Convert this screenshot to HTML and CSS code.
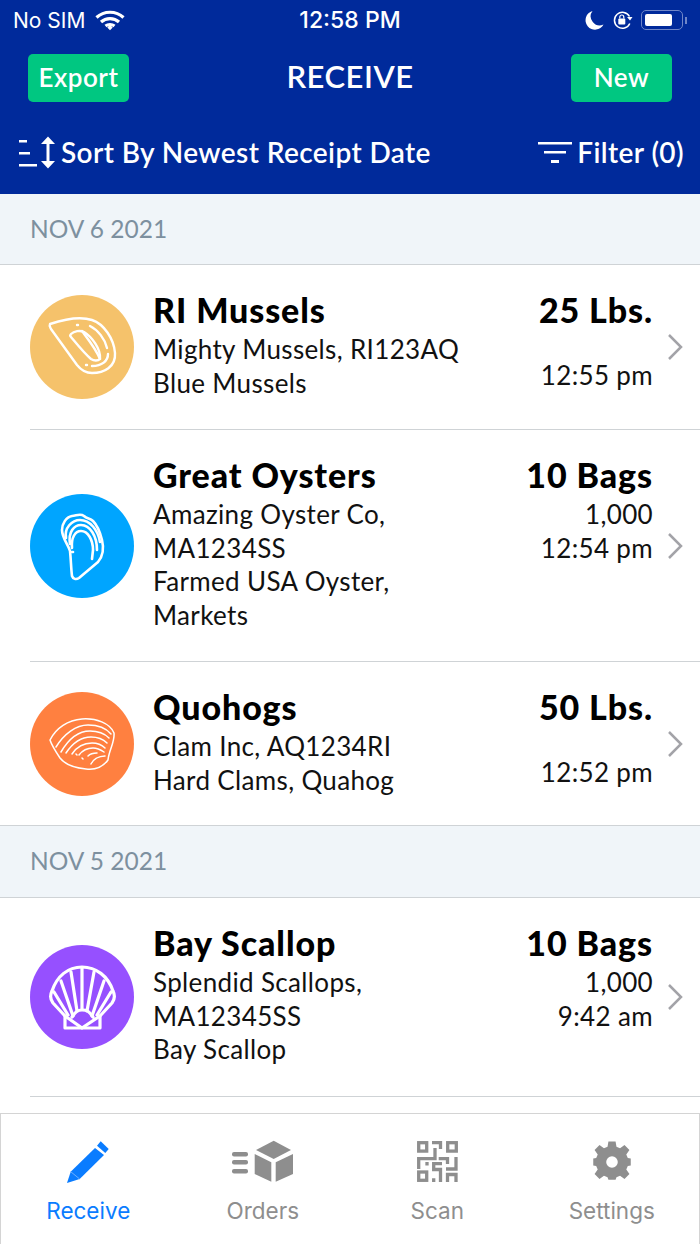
FILE: index.html
```html
<!DOCTYPE html>
<html lang="en">
<head>
    <meta charset="UTF-8">
    <meta name="viewport" content="width=device-width, initial-scale=1.0">
    <title>Receive</title>
    <link rel="stylesheet" href="styles.css">
</head>
<body>
    <div class="app">
        <header class="top">
            <div class="status-bar">
                <div class="status-left">
                    <span>No SIM</span>
                    <svg class="wifi" width="30" height="22" viewBox="0 0 30 22"><path d="M1.5 8.5C9 1.500 21 1.500 28.500 8.500M6 13C11 8.500 19 8.500 24 13M10.500 17C13 15 17 15 19.500 17" fill="none" stroke="#fff" stroke-width="3.200"/><path d="M12.300 18.500L15 15.800L17.700 18.500L15 21.200Z" fill="#fff"/></svg>
                </div>
                <span class="status-time">12:58 PM</span>
                <div class="status-right">
                    <svg width="20" height="20" viewBox="0 0 20 20"><path d="M7.500 1A9.500 9.500 0 1 0 18.500 14.500A9 9 0 0 1 7.500 1Z" fill="#fff"/></svg>
                    <svg width="22" height="20" viewBox="0 0 22 20"><path d="M17.500 6.500A8 8 0 1 0 17.800 13.500" fill="none" stroke="#fff" stroke-width="1.500"/><path d="M15 7L20.500 7L18 10.500Z" fill="#fff"/><rect x="6.300" y="8.500" width="7" height="6" rx="1" fill="#fff"/><path d="M7.800 8.500V7A2 2 0 0 1 11.800 7V8.500" fill="none" stroke="#fff" stroke-width="1.200"/></svg>
                    <div class="battery"><div class="battery-fill"></div></div>
                    <div class="battery-cap"></div>
                </div>
            </div>
            <div class="title-row">
                <button class="green-btn">Export</button>
                <h1>RECEIVE</h1>
                <button class="green-btn">New</button>
            </div>
            <div class="tools">
                <div class="tool">
                    <svg width="38" height="34" viewBox="0 0 38 34"><path d="M1 5H9V7.500H1ZM1 17H12V19.500H1ZM1 29H19V31.500H1Z" fill="#fff"/><path d="M30 4V30" stroke="#fff" stroke-width="3"/><path d="M23 9L30 1.500L37 9ZM23 26L30 33.500L37 26Z" fill="#fff"/></svg>
                    <span>Sort By Newest Receipt Date</span>
                </div>
                <div class="tool">
                    <svg width="34" height="24" viewBox="0 0 34 24"><path d="M0 2H34V4.500H0ZM6 11H28V13.500H6ZM13 20H21V23H13Z" fill="#fff"/></svg>
                    <span>Filter (0)</span>
                </div>
            </div>
        </header>

        <main class="list">
            <div class="day">NOV 6 2021</div>

            <div class="row">
                <div class="pic mussel">
                    <svg viewBox="0 0 104 104" width="104" height="104" fill="none" stroke="#fff" stroke-width="2.400" stroke-linecap="round" stroke-linejoin="round">
                        <path d="M20 29C19 31 20 32 21 34L47 70C51 75 56 78 62 78C74 78 86 72 85 58C84 44 74 29 62 25C50 21 32 25 20 29Z"/>
                        <path d="M41 39C44 36 50 35 54 37C62 42 71 54 70 64C68 66 64 66 61 64C54 58 46 48 41 42C40 41 40 40 41 39Z"/>
                        <path d="M52 36C58 44 66 54 70 64"/>
                        <path d="M60 31C68 35 75 44 77 53"/>
                        <path d="M78 59C78 66 72 71 62 71"/>
                        <path d="M47 30L48 30M56 70L57 70"/>
                    </svg>
                </div>
                <div class="info">
                    <div class="name">RI Mussels</div>
                    <div class="sub">Mighty Mussels, RI123AQ<br>Blue Mussels</div>
                </div>
                <div class="amounts">
                    <div class="qty">25 Lbs.</div>
                    <div class="sub no-count">12:55 pm</div>
                </div>
                <svg class="chev" width="18" height="28" viewBox="0 0 18 28"><path d="M3 2L15 14L3 26" fill="none" stroke="#a3a3a8" stroke-width="2.500"/></svg>
            </div>

            <div class="row">
                <div class="pic oyster">
                    <svg viewBox="0 0 104 104" width="104" height="104" fill="none" stroke="#fff" stroke-width="2.600" stroke-linecap="round" stroke-linejoin="round">
                        <path d="M42 82C43 85 46 86 49 84L68 68C73 62 74 54 72 46C70 38 68 32 63 27C60 24 57 25 54 22C50 19 46 22 42 22C36 23 32 30 32 36C32 44 38 50 40 57C41 66 41 74 42 82Z"/>
                        <path d="M36 44C34 34 42 26 50 26C60 26 68 36 70 48"/>
                        <path d="M40 50C38 38 44 31 51 31C60 31 67 42 67 56"/>
                        <path d="M42 54C41 44 45 37 51 37C58 37 63 46 63 56L62 65"/>
                        <path d="M42 58L43 58"/>
                    </svg>
                </div>
                <div class="info">
                    <div class="name">Great Oysters</div>
                    <div class="sub">Amazing Oyster Co,<br>MA1234SS<br>Farmed USA Oyster,<br>Markets</div>
                </div>
                <div class="amounts">
                    <div class="qty">10 Bags</div>
                    <div class="sub">1,000<br>12:54 pm</div>
                </div>
                <svg class="chev" width="18" height="28" viewBox="0 0 18 28"><path d="M3 2L15 14L3 26" fill="none" stroke="#a3a3a8" stroke-width="2.500"/></svg>
            </div>

            <div class="row last">
                <div class="pic clam">
                    <svg viewBox="0 0 104 104" width="104" height="104" fill="none" stroke="#fff" stroke-width="1.500" stroke-linecap="round" stroke-linejoin="round">
                        <path d="M20 48C26 36 38 28 52 27C66 26 80 31 84 41C85 50 79 58 78 68C72 76 64 78 56 77C46 76 36 74 30 66C26 60 22 54 20 48Z"/>
                        <path d="M26 55C34 42 46 33 58 33C68 33 76 36 81 42"/>
                        <path d="M31 60C38 48 48 39 60 39C68 39 74 41 79 46"/>
                        <path d="M36 61C42 52 50 45 61 45C68 45 73 47 77 51"/>
                        <path d="M42 62C46 56 53 51 62 51C68 51 72 53 75 56"/>
                        <path d="M49 63C52 59 57 56 63 56C67 56 71 58 74 60"/>
                        <path d="M58 64C60 62 63 61 67 61"/>
                        <path d="M61 72C63 68 68 64 75 64"/>
                        <path d="M46 62L47 63M52 66L53 67"/>
                    </svg>
                </div>
                <div class="info">
                    <div class="name">Quohogs</div>
                    <div class="sub">Clam Inc, AQ1234RI<br>Hard Clams, Quahog</div>
                </div>
                <div class="amounts">
                    <div class="qty">50 Lbs.</div>
                    <div class="sub no-count">12:52 pm</div>
                </div>
                <svg class="chev" width="18" height="28" viewBox="0 0 18 28"><path d="M3 2L15 14L3 26" fill="none" stroke="#a3a3a8" stroke-width="2.500"/></svg>
            </div>

            <div class="day second">NOV 5 2021</div>

            <div class="row bottom">
                <div class="pic scallop">
                    <svg viewBox="0 0 104 104" width="104" height="104" fill="none" stroke="#fff" stroke-width="3.200" stroke-linecap="round" stroke-linejoin="round">
                        <path d="M35 71L23 58C20 54 20 50 22 46C27 31 38 22 52 22C66 22 78 31 83 46C85 50 85 54 82 58L70 71V83H35Z"/>
                        <path d="M35 71L52 83L70 71M42 72C46 66 48 65 52 65C57 65 59 66 63 72"/>
                        <path d="M43 71L31 36M47 66L41 27M52 64V23M57 66L64 27M62 71L74 36M38 70L24 47M67 70L81 47"/>
                    </svg>
                </div>
                <div class="info">
                    <div class="name">Bay Scallop</div>
                    <div class="sub">Splendid Scallops,<br>MA12345SS<br>Bay Scallop</div>
                </div>
                <div class="amounts">
                    <div class="qty">10 Bags</div>
                    <div class="sub">1,000<br>9:42 am</div>
                </div>
                <svg class="chev" width="18" height="28" viewBox="0 0 18 28"><path d="M3 2L15 14L3 26" fill="none" stroke="#a3a3a8" stroke-width="2.500"/></svg>
            </div>
        </main>

        <nav class="tabs">
            <div class="tab active">
                <svg width="50" height="46" viewBox="0 0 50 46"><path d="M4 44L7.700 32.700L32 9L41 16L16.700 40Z" fill="#0a7cff"/><path d="M37.700 2.300L45.700 10L42.300 14L34 6.700Z" fill="#0a7cff"/><path d="M7.700 32.700L16.700 40" stroke="#6db0ff" stroke-width="1"/></svg>
                <span>Receive</span>
            </div>
            <div class="tab">
                <svg width="70" height="46" viewBox="0 0 70 46" fill="#8e8e8e"><rect x="4" y="13" width="16" height="4.500" rx="2"/><rect x="4" y="21" width="16" height="4.500" rx="2"/><rect x="4" y="30" width="16" height="4.500" rx="2"/><path d="M45.700 1.700L63 11L45.700 20L28 11Z"/><path d="M26.700 15L43.300 23.300V42.700L26.700 35Z"/><path d="M47.700 23.300L65 15V35L47.700 42.700Z"/></svg>
                <span>Orders</span>
            </div>
            <div class="tab">
                <svg class="qr" width="41" height="41" viewBox="0 0 41 41" fill="none" stroke="#8e8e8e" stroke-width="3.300"><rect x="1.700" y="1.700" width="8" height="8.400"/><rect x="30.700" y="1.700" width="8.600" height="8.400"/><rect x="1.700" y="31" width="8" height="8.300"/><path d="M15 1.700H23.500V8M1.700 28V17.700H18V7M21.700 17.700H30.500V23M39 16V28H29M25 22.700H16.700V28.500H23.500V41M30.500 41V33.500H39V41M16.700 37.300V41M10 21V24.500"/></svg>
                <span>Scan</span>
            </div>
            <div class="tab">
                <svg width="50" height="46" viewBox="-3 0 56 50"><path fill="#8e8e8e" fill-rule="evenodd" d="M21 2H29L30 8L34 9.700L39 6L44.500 11.500L41 16.500L42.700 20.500L46 21V29L42.700 29.500L41 33.500L44.500 38.500L39 44L34 40.300L30 42L29 45H21L20 42L16 40.300L11 44L5.500 38.500L9 33.500L7.300 29.500L4 29V21L7.300 20.500L9 16.500L5.500 11.500L11 6L16 9.700L20 8ZM25 18.500A6.500 6.500 0 1 0 25 31.500A6.500 6.500 0 1 0 25 18.500Z"/></svg>
                <span>Settings</span>
            </div>
        </nav>
    </div>
</body>
</html>
```

FILE: styles.css
```css
* {
    box-sizing: border-box;
}
body {
    margin: 0;
    font-family: Lato, "Open Sans", sans-serif;
    color: #000;
    background-color: #fff;
}
.app {
    display: flex;
    flex-direction: column;
    height: 1244px;
    overflow: hidden;
}

/* blue header */
.top {
    height: 194px;
    flex-shrink: 0;
    background-color: #002a9b;
    color: #fff;
}
.status-bar {
    display: grid;
    grid-template-columns: 1fr auto 1fr;
    align-items: center;
    height: 40px;
    padding: 0 13px;
    font-family: Inter, Roboto, sans-serif;
    font-size: 21px;
}
.status-time {
    font-size: 23px;
    font-weight: 500;
}
.status-left {
    display: flex;
    align-items: center;
    gap: 10px;
}
.status-right {
    display: flex;
    align-items: center;
    justify-content: flex-end;
    gap: 7px;
}
.battery {
    width: 42px;
    height: 20px;
    padding: 3px;
    border: 1.5px solid #6f86c8;
    border-radius: 5px;
}
.battery-fill {
    width: 27px;
    height: 100%;
    background-color: #fff;
    border-radius: 2px;
}
.battery-cap {
    width: 2px;
    height: 7px;
    margin-left: -5px;
    background-color: #6f86c8;
}
.title-row {
    display: flex;
    align-items: center;
    justify-content: space-between;
    margin-top: 14px;
    padding: 0 28px;
}
.title-row h1 {
    margin: 0 0 4px;
    font-size: 31px;
    font-weight: 600;
    letter-spacing: 0.5px;
}
.green-btn {
    width: 101px;
    height: 48px;
    padding: 0 0 3px;
    border: none;
    border-radius: 5px;
    background-color: #00c781;
    color: #fff;
    font-family: inherit;
    font-size: 26px;
    font-weight: 600;
    letter-spacing: 0.5px;
}
.tools {
    display: flex;
    align-items: center;
    justify-content: space-between;
    margin-top: 33px;
    padding: 0 16px 0 18px;
}
.tool {
    display: flex;
    align-items: center;
    gap: 5px;
    font-size: 28px;
    font-weight: 600;
    letter-spacing: 0.4px;
}

/* list */
.list {
    flex: 1;
    overflow: hidden;
}
.day {
    display: flex;
    align-items: center;
    height: 71px;
    padding: 0 0 2px 30px;
    background-color: #f0f5f9;
    border-bottom: 1px solid #cfd3d6;
    color: #7d909f;
    font-size: 24.5px;
}
.day.second {
    height: 72px;
    padding-bottom: 3px;
}
.row {
    display: flex;
    align-items: center;
    margin-left: 30px;
    padding: 25px 16px 29px 0;
    border-bottom: 1px solid #cfd3d6;
}
.row.last {
    padding-bottom: 28px;
    margin-left: 0;
    padding-left: 30px;
}
.pic {
    width: 104px;
    height: 104px;
    flex-shrink: 0;
    margin: 4px 19px 0 0;
    border-radius: 50%;
}
.pic svg {
    display: block;
}
.mussel {
    background-color: #f5c26b;
}
.oyster {
    background-color: #00a5ff;
}
.clam {
    background-color: #ff8040;
}
.scallop {
    background-color: #9650ff;
}
.info {
    flex: 1;
    align-self: flex-start;
}
.name, .qty {
    height: 39px;
    margin-bottom: 4px;
    line-height: 40px;
    font-size: 34px;
    font-weight: 900;
    letter-spacing: 0.9px;
}
.sub {
    font-size: 26px;
    line-height: 33.5px;
    letter-spacing: 0.35px;
    color: #111;
}
.amounts {
    align-self: flex-start;
    text-align: right;
}
.no-count {
    margin-top: 30px;
}
.chev {
    flex-shrink: 0;
    margin: 4px 0 0 13px;
}

/* tab bar */
.tabs {
    display: grid;
    grid-template-columns: repeat(4, 1fr);
    height: 131px;
    flex-shrink: 0;
    border: 1.5px solid #d4d4d4;
    border-bottom: none;
}
.tab {
    display: flex;
    flex-direction: column;
    align-items: center;
    padding-top: 25px;
    font-family: Inter, Roboto, sans-serif;
    font-size: 22.5px;
    color: #8e8e8e;
}
.tab span {
    margin-top: 12px;
}
.tab.active {
    color: #0a7cff;
}
.qr {
    margin: 2px 0 3px;
}
```
